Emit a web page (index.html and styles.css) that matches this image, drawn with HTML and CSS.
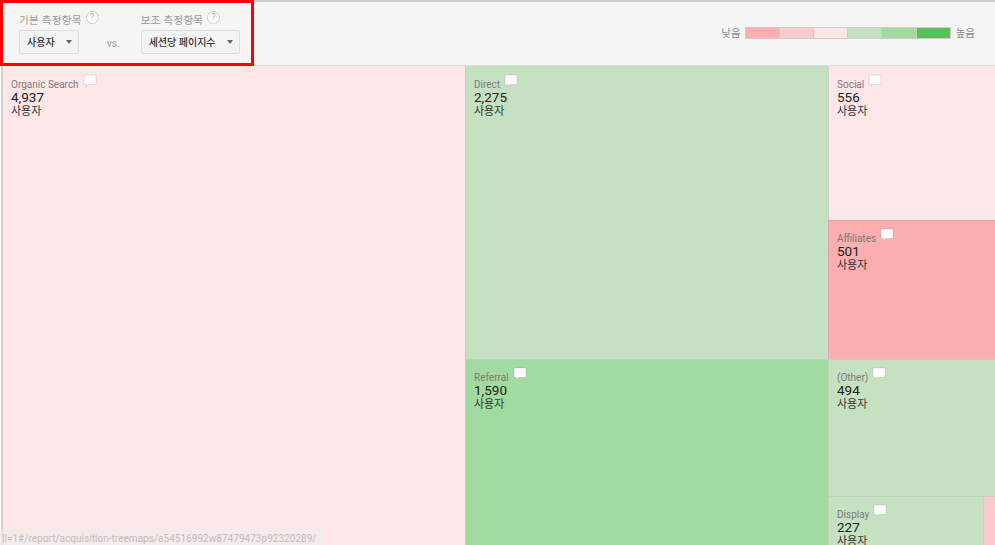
FILE: index.html
```html
<!DOCTYPE html>
<html lang="ko">
<head>
<meta charset="utf-8">
<title>Treemap</title>
<link rel="stylesheet" href="styles.css">
</head>
<body>
<svg class="defs" width="0" height="0" aria-hidden="true"><symbol id="note" viewBox="0 0 14 14"><path d="M1 1H13V10.500H5.500L3.500 13V10.500H1Z" fill="#fff" stroke="#000" stroke-opacity="0.1" stroke-width="1"/></symbol></svg>
<div class="page">
  <header class="bar">
    <div class="metrics">
      <div class="metric metric-a">
        <div class="metric-label">기본 측정항목<span class="help">?</span></div>
        <div class="select"><span>사용자</span><i class="caret"></i></div>
      </div>
      <span class="vs">vs.</span>
      <div class="metric metric-b">
        <div class="metric-label">보조 측정항목<span class="help">?</span></div>
        <div class="select"><span>세션당 페이지수</span><i class="caret"></i></div>
      </div>
    </div>
    <div class="legend">
      <span class="legend-low">낮음</span>
      <div class="scale"><i class="c1"></i><i class="c2"></i><i class="c3"></i><i class="c4"></i><i class="c5"></i><i class="c6"></i></div>
      <span>높음</span>
    </div>
  </header>
  <main class="treemap">
    <section class="col col-1">
      <article class="cell pale fill">
        <div class="name">Organic Search<svg class="note"><use href="#note"/></svg></div>
        <div class="num">4,937</div><div class="unit">사용자</div>
      </article>
    </section>
    <section class="col col-2">
      <article class="cell mint h-direct">
        <div class="name">Direct<svg class="note"><use href="#note"/></svg></div>
        <div class="num">2,275</div><div class="unit">사용자</div>
      </article>
      <article class="cell green fill">
        <div class="name">Referral<svg class="note"><use href="#note"/></svg></div>
        <div class="num">1,590</div><div class="unit">사용자</div>
      </article>
    </section>
    <section class="col col-3">
      <article class="cell pale h-social">
        <div class="name">Social<svg class="note"><use href="#note"/></svg></div>
        <div class="num">556</div><div class="unit">사용자</div>
      </article>
      <article class="cell red h-aff">
        <div class="name">Affiliates<svg class="note"><use href="#note"/></svg></div>
        <div class="num">501</div><div class="unit">사용자</div>
      </article>
      <article class="cell mint h-other">
        <div class="name">(Other)<svg class="note"><use href="#note"/></svg></div>
        <div class="num">494</div><div class="unit">사용자</div>
      </article>
      <div class="row fill">
        <article class="cell mint w-display">
          <div class="name">Display<svg class="note"><use href="#note"/></svg></div>
          <div class="num">227</div><div class="unit">사용자</div>
        </article>
        <article class="cell rose fill"></article>
      </div>
    </section>
  </main>
  <div class="highlight"></div>
  <div class="status">ll=1#/report/acquisition-treemaps/a54516992w87479473p92320289/</div>
</div>
</body>
</html>
```
FILE: styles.css
```css
* { box-sizing: border-box; }
html, body { margin: 0; height: 100%; overflow: hidden; background: #fff; }
body { font-family: Roboto, "Noto Sans CJK KR", sans-serif; color: #222; }
.defs { position: absolute; }
.page { position: relative; width: 995px; height: 545px; overflow: hidden; }

.bar {
  height: 66px;
  display: flex;
  justify-content: space-between;
  background: #f5f5f5;
  border-top: 2px solid #ccc;
  border-bottom: 1px solid #ddd;
}
.metrics { display: flex; align-items: flex-start; padding: 9px 0 0 19px; }
.metric-a { width: 60px; }
.metric-b { width: 99px; }
.metric-label { display: flex; align-items: center; height: 17px; font-size: 10.5px; color: #999; letter-spacing: 0.3px; white-space: nowrap; }
.help {
  flex: none; width: 13px; height: 13px; margin: -4px 0 0 4px;
  border: 1px solid #ccc; border-radius: 50%;
  background: #fff; color: #aaa;
  font-size: 9px; line-height: 11px; text-align: center;
}
.select {
  display: flex; align-items: center; justify-content: space-between;
  height: 24px; margin-top: 2px; padding: 0 6px 0 7px;
  border: 1px solid #ddd; border-radius: 2px;
  background: #f4f4f4;
  font-size: 10px; font-weight: 500; color: #333;
  white-space: nowrap;
}
.select span { position: relative; top: -1px; }
.caret { width: 0; height: 0; border: 3.5px solid transparent; border-top: 4px solid #666; border-bottom: 0; }
.vs { margin: 27px 21px 0 28px; font-size: 10px; color: #999; }

.legend { display: flex; align-items: center; gap: 5px; height: 61px; padding-right: 20px; font-size: 10.5px; color: #888; }
.legend-low { margin-right: -1px; }
.scale { display: flex; width: 206px; height: 12px; border: 1px solid #ccc; }
.scale i { flex: 1; border-left: 1px solid #ccc; }
.scale i:first-child { border-left: 0; }
.c1 { background: #fcaeb0; }
.c2 { background: #fdcbcb; }
.c3 { background: #fde7e7; }
.c4 { background: #c5e1c2; }
.c5 { background: #a2db9f; }
.c6 { background: #55c157; }

.treemap { display: flex; height: 479px; padding-left: 1px; }
.col { display: flex; flex-direction: column; }
.col-1 { width: 464px; }
.col-2 { width: 363px; }
.col-3 { width: 167px; }
.row { display: flex; min-height: 0; }
.fill { flex: 1; }

.cell { padding: 11px 8px 0; border-left: 1px solid #ccc; border-top: 1px solid #ccc; overflow: hidden; }
.col-1 .cell { padding-left: 8px; border-left-width: 2px; }
.col > .cell:first-child { border-top: 0; padding-top: 12px; }
.pale { background: #fde7e8; border-color: #d6cccc; }
.mint { background: #c5e1c2; border-color: #bcd3ba; }
.green { background: #a2db9f; border-color: #bcd3ba; }
.red { background: #fcaeb0; border-color: #e3a6a8; }
.rose { background: #fdcbcb; border-color: #ccc; padding: 0; }
.h-direct { height: 293px; }
.h-social { height: 154px; }
.h-aff { height: 139px; }
.h-other { height: 137px; }
.w-display { width: 155px; }

.name { height: 12px; font-size: 10px; line-height: 13px; color: #7b7b7b; white-space: nowrap; }
.note { position: relative; top: -4px; width: 14px; height: 14px; margin-left: 4px; vertical-align: top; }
.num { font-size: 13.5px; line-height: 14px; color: #222; }
.unit { margin-top: 2px; font-size: 11px; line-height: 12px; color: #333; }

.highlight { position: absolute; left: 0; top: 0; width: 254px; height: 66px; border: 3px solid #f00; }
.status {
  position: absolute; left: 0; bottom: 0; width: 323px; height: 16px; padding-left: 2px;
  background: rgba(240, 236, 236, 0.65);
  border-top-right-radius: 4px;
  font-size: 10px; line-height: 20px; letter-spacing: 0.03px; color: #c4bcbc; white-space: nowrap; overflow: hidden;
}
```
